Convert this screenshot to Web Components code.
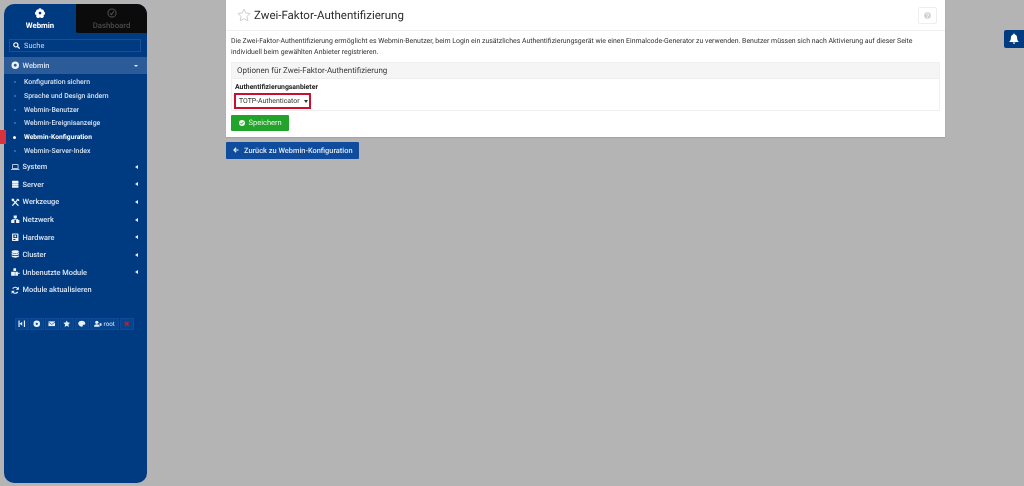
<!DOCTYPE html>
<html lang="de">
<head>
<meta charset="utf-8">
<title>Zwei-Faktor-Authentifizierung</title>
<style>
  html, body { margin: 0; height: 100%; }
  body {
    background: #b4b4b4;
    font-family: Roboto, "Liberation Sans", sans-serif;
    text-rendering: geometricPrecision;
    overflow: hidden;
  }
</style>
</head>
<body>
<wm-app>
  <wm-sidebar slot="side">
    <wm-nav-item icon="webmin" open>Webmin</wm-nav-item>
    <wm-sub-item style="margin-top:1.200px">Konfiguration sichern</wm-sub-item>
    <wm-sub-item>Sprache und Design ändern</wm-sub-item>
    <wm-sub-item>Webmin-Benutzer</wm-sub-item>
    <wm-sub-item>Webmin-Ereignisanzeige</wm-sub-item>
    <wm-sub-item active>Webmin-Konfiguration</wm-sub-item>
    <wm-sub-item>Webmin-Server-Index</wm-sub-item>
    <wm-nav-item icon="laptop" arrow>System</wm-nav-item>
    <wm-nav-item icon="server" arrow>Server</wm-nav-item>
    <wm-nav-item icon="tools" arrow>Werkzeuge</wm-nav-item>
    <wm-nav-item icon="network" arrow>Netzwerk</wm-nav-item>
    <wm-nav-item icon="hdd" arrow>Hardware</wm-nav-item>
    <wm-nav-item icon="db" arrow>Cluster</wm-nav-item>
    <wm-nav-item icon="cubes" arrow>Unbenutzte Module</wm-nav-item>
    <wm-nav-item icon="sync">Module aktualisieren</wm-nav-item>
    <wm-toolbar></wm-toolbar>
  </wm-sidebar>
  <wm-panel slot="main" heading="Zwei-Faktor-Authentifizierung">
    <wm-options></wm-options>
  </wm-panel>
  <wm-back slot="main">Zurück zu Webmin-Konfiguration</wm-back>
  <wm-bell slot="main"></wm-bell>
</wm-app>

<script>
const ICONS = {
  webmin: '<circle cx="8" cy="8" r="7" fill="currentColor"/><circle cx="8" cy="8" r="2.600" fill="#2b5b98"/>',
  laptop: '<path fill="currentColor" d="M3 2.500h10a1 1 0 0 1 1 1V11H2V3.500a1 1 0 0 1 1-1zm.4 1.400v5.700h9.200V3.900zM0 11.600h16v.6a1.200 1.200 0 0 1-1.200 1.200H1.200A1.200 1.200 0 0 1 0 12.200z"/>',
  server: '<path fill="currentColor" d="M2 1.500h12v4H2zM2 6.300h12v3.400H2zM2 10.500h12v4H2z"/>',
  tools: '<path fill="none" stroke="currentColor" stroke-width="2.400" d="M2.500 14.500 12 4M3 3l11 11.500"/><path fill="currentColor" d="M.5 3.500 3.500.5l3 2.500-3.500 3.500zM10 2a3.500 3.500 0 0 1 5.500 3.500l-2.300 0L11.500 3.500z"/>',
  network: '<path fill="currentColor" d="M5 1h6v5.200H5zM.3 9.500h6.200V15H.3zM9.500 9.500h6.200V15H9.500zM7.300 6.200h1.400v1.500h4.800v1.800h-1.400V9H4v.5H2.500V7.700h4.800z"/>',
  hdd: '<path fill="currentColor" fill-rule="evenodd" d="M3 .8h10a1 1 0 0 1 1 1v12.400a1 1 0 0 1-1 1H3a1 1 0 0 1-1-1V1.800a1 1 0 0 1 1-1zm1.300 2v6.800h7.400V2.800zM4.300 11.300v1.800h4v-1.800z"/><circle cx="8" cy="6.200" r="1.800" fill="currentColor"/>',
  db: '<ellipse cx="8" cy="3.500" rx="6.800" ry="2.800" fill="currentColor"/><path fill="currentColor" d="M1.200 5.400C3 7.500 13 7.500 14.800 5.400V8C13 10.400 3 10.400 1.200 8zM1.200 9.700c1.800 2.100 11.800 2.100 13.600 0v2.700c-1.800 2.800-11.800 2.800-13.600 0z"/>',
  cubes: '<path fill="currentColor" d="M4.500.5h5v5h-5zM.3 7h7v7.500h-7zM8 7h5v7.500H8zM13.500 9H16v2.200h-2.500z"/>',
  sync: '<path fill="none" stroke="currentColor" stroke-width="2.200" d="M13.300 6.200A5.600 5.600 0 0 0 3.200 5M2.700 9.800A5.600 5.600 0 0 0 12.800 11"/><path fill="currentColor" d="M14.800 1.200v5.800H9zM1.200 14.800V9H7z"/>'
};

class WmApp extends HTMLElement {
  constructor() {
    super();
    this.attachShadow({ mode: 'open' }).innerHTML = `
      <style>
        :host { display: flex; height: 486px; position: relative; filter: blur(.3px); }
        .side { padding: 4px 0 3px 4px; width: 143px; flex: none; display: flex; }
        .main { margin-left: 79px; width: 719px; display: flex; flex-direction: column; align-items: flex-start; }
      </style>
      <div class="side"><slot name="side"></slot></div>
      <div class="main"><slot name="main"></slot></div>
    `;
  }
}

class WmSidebar extends HTMLElement {
  constructor() {
    super();
    this.attachShadow({ mode: 'open' }).innerHTML = `
      <style>
        :host {
          display: block;
          width: 143px;
          background: #003a80;
          border-radius: 10px;
          color: #dbe6f4;
          position: relative;
        }
        .tabs { display: flex; height: 29px; font-size: 7.800px; font-weight: 700; }
        .tab { display: flex; flex-direction: column; align-items: center; padding-top: 4px; box-sizing: border-box; gap: 2.500px; }
        .tab.on { width: 72px; color: #fff; }
        .tab.off { width: 71px; background: #0b0b0b; color: #4b4b4b; font-weight: 500; border-top-right-radius: 10px; border-bottom-left-radius: 2px; }
        .tab svg { width: 10px; height: 10px; display: block; }
        .search {
          margin: 6px 6px 5px 5px;
          height: 13px;
          box-sizing: border-box;
          border: 1px solid #14509b;
          display: flex;
          align-items: center;
          gap: 4px;
          padding-left: 3px;
          font-size: 7.400px;
          color: #cfdced;
        }
        .search svg { width: 7px; height: 7px; }
      </style>
      <div class="tabs">
        <div class="tab on">
          <svg viewBox="0 0 16 16"><path fill="currentColor" d="M8 .5a3 3 0 0 1 2.700 1.800 3 3 0 0 1 3.500 3.200 3 3 0 0 1-.6 5.800A3.200 3.200 0 0 1 8 14.500a3.200 3.200 0 0 1-5.600-3.200 3 3 0 0 1-.6-5.800 3 3 0 0 1 3.500-3.200A3 3 0 0 1 8 .5z"/><circle cx="8" cy="8" r="2.200" fill="#003a80"/></svg>
          <span>Webmin</span>
        </div>
        <div class="tab off">
          <svg viewBox="0 0 16 16"><circle cx="8" cy="8" r="6.500" fill="none" stroke="currentColor" stroke-width="1.800"/><path fill="none" stroke="currentColor" stroke-width="1.800" d="M5 8.500l2 2 4-5"/></svg>
          <span>Dashboard</span>
        </div>
      </div>
      <div class="search">
        <svg viewBox="0 0 16 16"><circle cx="6.500" cy="6.500" r="4.800" fill="none" stroke="#fff" stroke-width="2.600"/><path stroke="#fff" stroke-width="3" d="M10 10l5 5"/></svg>
        <span>Suche</span>
      </div>
      <slot></slot>
    `;
  }
}

class WmNavItem extends HTMLElement {
  constructor() {
    super();
    const open = this.hasAttribute('open');
    const arrow = open ? '<i class="down"></i>' : (this.hasAttribute('arrow') ? '<i class="left"></i>' : '');
    this.attachShadow({ mode: 'open' }).innerHTML = `
      <style>
        :host {
          display: flex;
          align-items: center;
          height: ${open ? 17 : 17.600}px;
          padding: 0 9px 0 7px;
          font-size: 7.400px;
          font-weight: 500;
          color: #dbe6f4;
          background: ${open ? '#2b5b98' : 'transparent'};
        }
        svg { width: 8.500px; height: 8.500px; margin-right: 3px; flex: none; color: #eef3fa; }
        span { flex: 1; white-space: nowrap; }
        i { display: block; width: 0; height: 0; }
        .left { border: 2px solid transparent; border-left-width: 0; border-right: 3px solid #e6edf6; }
        .down { border: 2px solid transparent; border-bottom-width: 0; border-top: 2.500px solid #e6edf6; border-left-width: 2.500px; border-right-width: 2.500px; }
      </style>
      <svg viewBox="0 0 16 16">${ICONS[this.getAttribute('icon')]}</svg>
      <span><slot></slot></span>${arrow}
    `;
  }
}

class WmSubItem extends HTMLElement {
  constructor() {
    super();
    const active = this.hasAttribute('active');
    this.attachShadow({ mode: 'open' }).innerHTML = `
      <style>
        :host {
          display: flex;
          align-items: center;
          height: 13.800px;
          font-size: ${active ? 6.700 : 6.900}px;
          color: ${active ? '#fff' : '#d3e0f0'};
          font-weight: ${active ? 700 : 500};
          position: relative;
        }
        b {
          width: ${active ? 3 : 2}px; height: ${active ? 3 : 2}px; border-radius: 50%;
          background: ${active ? '#fff' : '#3f78b8'};
          margin: 0 ${active ? 8 : 8.500}px 0 ${active ? 9 : 9.500}px;
          flex: none;
        }
        span { white-space: nowrap; }
        u { position: absolute; left: -4px; top: 0; bottom: 0; width: 6px; background: #d8323f; }
      </style>
      ${active ? '<u></u>' : ''}<b></b><span><slot></slot></span>
    `;
  }
}

class WmToolbar extends HTMLElement {
  constructor() {
    super();
    const btn = (inner, w) => `<div class="b" style="width:${w}px">${inner}</div>`;
    this.attachShadow({ mode: 'open' }).innerHTML = `
      <style>
        :host { display: flex; gap: 1px; margin: 19px 0 0 11px; height: 12.500px; font-size: 6.300px; color: #dbe6f4; }
        .b { background: #06448e; display: flex; align-items: center; justify-content: center; gap: 2px; border: 1px solid #0e4c98; box-sizing: border-box; }
        svg { width: 7.500px; height: 7.500px; color: #e9eff8; flex: none; }
      </style>
      ${btn('<svg viewBox="0 0 16 16"><path fill="currentColor" d="M1 1h2.500v14H1zM12.500 1H15v14h-2.500zM3.500 8L9 3.500v9z"/></svg>', 14)}
      ${btn('<svg viewBox="0 0 16 16"><circle cx="8" cy="8" r="7" fill="currentColor"/><circle cx="8" cy="8" r="2.400" fill="#06448e"/></svg>', 14)}
      ${btn('<svg viewBox="0 0 16 16"><path fill="currentColor" d="M1 3h14v10H1z"/><path fill="none" stroke="#06448e" stroke-width="1.400" d="M1 4.500l7 5 7-5"/></svg>', 14)}
      ${btn('<svg viewBox="0 0 16 16"><path fill="currentColor" d="M8 .8l2.200 4.700 5.100.6-3.800 3.500 1 5.100L8 12.200 3.500 14.700l1-5.100L.7 6.100l5.100-.6z"/></svg>', 14)}
      ${btn('<svg viewBox="0 0 16 16"><path fill="currentColor" d="M8 1.500c4.500 0 7.500 2.800 7.500 6 0 2-1.500 2.800-3 2.500-1.500-.3-2.500.3-2.300 1.700.2 1.800-1 2.800-2.700 2.500C3.500 13.300.5 11 .5 7.500.5 4 3.500 1.500 8 1.500z"/></svg>', 14)}
      ${btn('<svg viewBox="0 0 16 16"><circle cx="6" cy="5" r="3.500" fill="currentColor"/><path fill="currentColor" d="M0 14.500c0-4 2.500-5.500 6-5.500s6 1.500 6 5.500zM12 7h4v5h-4z"/></svg><span>root</span>', 29)}
      ${btn('<svg viewBox="0 0 16 16"><path stroke="#a8283f" stroke-width="3.200" d="M4 4l8 8M12 4l-8 8"/></svg>', 14)}
    `;
  }
}

class WmPanel extends HTMLElement {
  constructor() {
    super();
    this.attachShadow({ mode: 'open' }).innerHTML = `
      <style>
        :host { display: block; width: 719px; height: 137.300px; background: #fff; color: #333; box-sizing: border-box; box-shadow: 0 1px 1px rgba(0,0,0,.08); }
        header {
          height: 31px; box-sizing: border-box; border-bottom: 1px solid #f0f0f0;
          display: flex; align-items: center; padding: 0 8px 1px 10.500px;
        }
        .star { width: 14px; height: 14px; margin-right: 3.500px; flex: none; }
        h1 { margin: 0; font-size: 11.500px; font-weight: 400; color: #2b2b2b; flex: 1; white-space: nowrap; }
        .help { width: 19px; height: 17px; border: 1px solid #eeeeee; border-radius: 2px; box-sizing: border-box; display: flex; align-items: center; justify-content: center; margin-top: 1px; }
        .help svg { width: 7px; height: 7px; }
        p { margin: 5.300px 5px 4.600px; font-size: 6.930px; line-height: 10.700px; color: #333; }
      </style>
      <header>
        <svg class="star" viewBox="0 0 16 16"><path fill="none" stroke="#c9c9c9" stroke-width="1" d="M8 1.200l2.100 4.500 4.900.6-3.600 3.400.9 4.900L8 12.200l-4.300 2.400.9-4.900L1 6.300l4.900-.6z"/></svg>
        <h1></h1>
        <div class="help"><svg viewBox="0 0 16 16"><circle cx="8" cy="8" r="7.500" fill="#cfcfcf"/><path fill="none" stroke="#fff" stroke-width="2" d="M5.500 6.200A2.500 2.500 0 1 1 8 9v1.200"/><circle cx="8" cy="12.600" r="1.200" fill="#fff"/></svg></div>
      </header>
      <p>Die Zwei-Faktor-Authentifizierung ermöglicht es Webmin-Benutzer, beim Login ein zusätzliches Authentifizierungsgerät wie einen Einmalcode-Generator zu verwenden. Benutzer müssen sich nach Aktivierung auf dieser Seite individuell beim gewählten Anbieter registrieren.</p>
      <slot></slot>
    `;
    this.shadowRoot.querySelector('h1').textContent = this.getAttribute('heading');
  }
}

class WmOptions extends HTMLElement {
  constructor() {
    super();
    this.attachShadow({ mode: 'open' }).innerHTML = `
      <style>
        :host { display: block; margin: 0 5px; color: #333; }
        .box { border: 1px solid #f0f0f0; height: 49px; box-sizing: border-box; }
        .head { height: 15px; background: #f5f5f5; border-bottom: 1px solid #eeeeee; font-size: 8px; display: flex; align-items: center; padding-left: 5px; color: #3a3a3a; }
        label { display: block; font-size: 6.900px; font-weight: 700; color: #222; margin: 4px 0 0 3px; line-height: 9px; }
        .sel {
          width: 77px; height: 16px; margin: 1px 0 0 2px; box-sizing: border-box;
          border: 2px solid #c8102e; display: flex; align-items: center;
          padding: 0 1px 0 3px; font-size: 6.900px; color: #333; white-space: nowrap;
        }
        .sel span { flex: 1; }
        .sel i { width: 0; height: 0; flex: none; border: 2px solid transparent; border-top: 3px solid #333; border-bottom-width: 0; }
        .save {
          margin-top: 3.700px; width: 58px; height: 16px; background: #22a32a; color: #e6f5e6;
          display: flex; align-items: center; font-size: 7.500px; border-radius: 1px; padding-left: 7.500px; box-sizing: border-box; gap: 4px;
        }
        .save svg { width: 6px; height: 6px; flex: none; }
      </style>
      <div class="box">
        <div class="head">Optionen für Zwei-Faktor-Authentifizierung</div>
        <label>Authentifizierungsanbieter</label>
        <div class="sel"><span>TOTP-Authenticator</span><i></i></div>
      </div>
      <div class="save">
        <svg viewBox="0 0 16 16"><circle cx="8" cy="8" r="8" fill="#eef8ee"/><path fill="none" stroke="#22a32a" stroke-width="2.400" d="M4 8.300l3 3 5-6"/></svg>
        <span>Speichern</span>
      </div>
    `;
  }
}

class WmBack extends HTMLElement {
  constructor() {
    super();
    this.attachShadow({ mode: 'open' }).innerHTML = `
      <style>
        :host {
          display: flex; align-items: center; gap: 5px; margin-top: 4.700px;
          width: 132.600px; height: 16.700px; box-sizing: border-box; padding-left: 7px;
          background: #0f4c9e; color: #dfe8f5; font-size: 7.400px; font-weight: 500; border-radius: 1px; white-space: nowrap;
        }
        svg { width: 6px; height: 6px; flex: none; }
      </style>
      <svg viewBox="0 0 16 16"><path fill="none" stroke="#e6edf6" stroke-width="3" d="M15 8H3M8.500 2L2.500 8l6 6"/></svg>
      <span><slot></slot></span>
    `;
  }
}

class WmBell extends HTMLElement {
  constructor() {
    super();
    this.attachShadow({ mode: 'open' }).innerHTML = `
      <style>
        :host {
          position: absolute; top: 30px; right: 0; width: 20.500px; height: 17.700px;
          background: #003a80; border-radius: 2px 0 0 2px;
          display: flex; align-items: center; padding-left: 5.500px; box-sizing: border-box;
        }
        svg { width: 10px; height: 11px; }
      </style>
      <svg viewBox="0 0 16 16"><path fill="#fff" d="M8 0a1.300 1.300 0 0 1 1.300 1.400C12 2 13 4 13 7c0 3 1 4.500 2.300 5.600V13.500H.7v-.9C2 11.500 3 10 3 7c0-3 1-5 3.700-5.600A1.300 1.300 0 0 1 8 0zM6 14.300h4A2 2 0 0 1 6 14.300z"/></svg>
    `;
  }
}

customElements.define('wm-app', WmApp);
customElements.define('wm-sidebar', WmSidebar);
customElements.define('wm-nav-item', WmNavItem);
customElements.define('wm-sub-item', WmSubItem);
customElements.define('wm-toolbar', WmToolbar);
customElements.define('wm-panel', WmPanel);
customElements.define('wm-options', WmOptions);
customElements.define('wm-back', WmBack);
customElements.define('wm-bell', WmBell);
</script>
</body>
</html>
